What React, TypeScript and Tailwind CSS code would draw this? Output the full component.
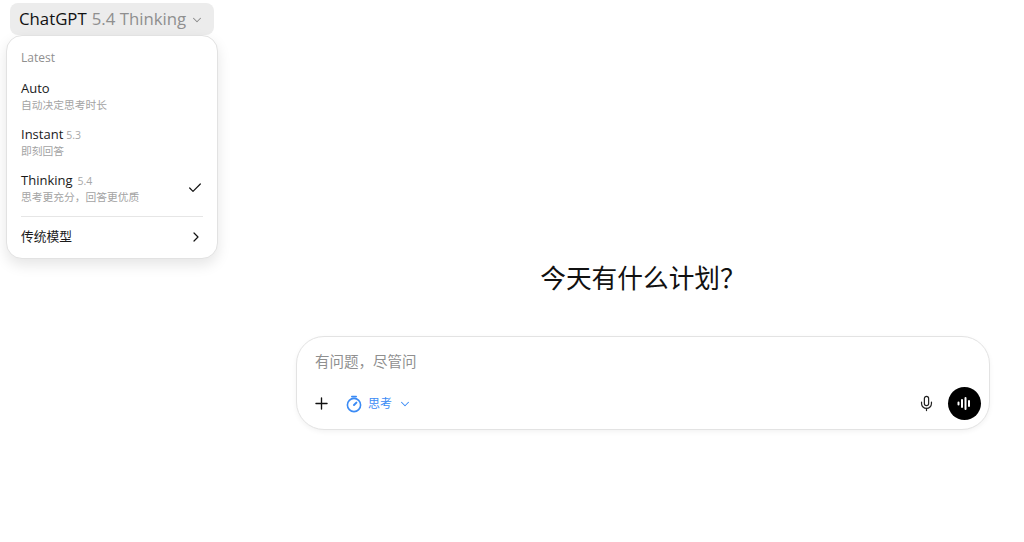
import React from "react";
import { Check, ChevronDown, ChevronRight, Mic, Plus } from "lucide-react";

function Item({ name, ver, sub, checked, gap }: { name: string; ver?: string; sub: string; checked?: boolean; gap?: string }) {
  return (
    <div className="flex h-[46px] items-center justify-between pl-[14px] pr-[14px]">
      <div className="flex flex-col">
        <div className={`flex items-baseline h-[17px] leading-[17px] ${gap === "wide" ? "gap-[5px]" : "gap-[3px]"}`}>
          <span className="text-[13px] text-[#1a1a1a]">{name}</span>
          {ver && <span className="text-[10.5px] text-[#a8a8a8]">{ver}</span>}
        </div>
        <div className="mt-px text-[10.75px] leading-[14px] text-[#a3a3a3]">{sub}</div>
      </div>
      {checked && <Check size={16} strokeWidth={1.8} className="text-[#111]" />}
    </div>
  );
}

export default function App() {
  return (
    <div className="relative h-[542px] w-[1024px] overflow-hidden bg-white [font-family:'Open_Sans','Noto_Sans_CJK_SC',sans-serif]">
      <div className="pl-[10px] pt-[3px]">
        <button className="flex h-[32px] w-[204px] items-center rounded-[8px] bg-[#ececec] pl-[9px] pt-px text-[16.8px] leading-none whitespace-nowrap">
          <span className="text-[#111]">ChatGPT</span>
          <span className="ml-[5px] text-[#8f8f8f]">5.4 Thinking</span>
          <ChevronDown size={14} strokeWidth={1.8} className="ml-[4px] text-[#8a8a8a]" />
        </button>
      </div>

      <div className="absolute left-[6px] top-[35px] h-[224px] w-[212px] rounded-[16px] border border-[#e2e2e2] bg-white pt-[10px] shadow-[0_6px_14px_rgba(0,0,0,0.10)]">
        <div className="h-[26px] pl-[14px] text-[12px] leading-[24px] text-[#8f8f8f]">Latest</div>
        <div className="h-px" />
        <Item name="Auto" sub="自动决定思考时长" />
        <Item name="Instant" ver="5.3" sub="即刻回答" />
        <Item name="Thinking" ver="5.4" sub="思考更充分，回答更优质" checked gap="wide" />
        <div className="mx-[14px] mt-[5px] h-px bg-[#e6e6e6]" />
        <div className="flex h-[40px] items-center justify-between pl-[14px] pr-[13px]">
          <span className="text-[12.75px] text-[#1a1a1a]">传统模型</span>
          <ChevronRight size={16} strokeWidth={1.8} className="text-[#111]" />
        </div>
      </div>

      <div className="ml-[296px] mr-[34px] flex flex-col pt-[224px]">
        <h1 className="h-[40px] text-center text-[25.7px] font-normal leading-[40px] text-[#111]">今天有什么计划？</h1>
        <div className="mt-[37px] h-[94px] rounded-[28px] border border-[#e3e3e3] bg-white shadow-[0_2px_5px_rgba(0,0,0,0.05)]">
          <div className="pl-[18px] pt-[15px] text-[14.5px] leading-[20px] text-[#8f8f8f]">有问题，尽管问</div>
          <div className="mt-[15px] flex items-center pl-[15px] pr-[8px]">
            <Plus size={19} strokeWidth={1.7} className="text-[#111]" />
            <svg width="18" height="18" viewBox="0 0 18 18" fill="none" stroke="#3b8bf5" strokeWidth="1.6" strokeLinecap="round" className="ml-[14px]">
              <circle cx="9" cy="10" r="6.6" />
              <path d="M6.8 1.6h4.4" />
              <path d="M9 10l2.4-2.4" strokeWidth="2" />
            </svg>
            <span className="ml-[5px] text-[12px] text-[#3b8bf5]">思考</span>
            <ChevronDown size={14} strokeWidth={1.8} className="ml-[6px] text-[#3b8bf5]" />
            <div className="flex-1" />
            <Mic size={17} strokeWidth={1.7} className="text-[#222]" />
            <div className="ml-[13px] flex h-[33px] w-[33px] items-center justify-center rounded-full bg-black">
              <svg width="15" height="13" viewBox="0 0 15 13" stroke="#fff" strokeWidth="2" strokeLinecap="round">
                <path d="M1.5 5.5v2M5 3v7M8.5 1v11M12 4v5" />
              </svg>
            </div>
          </div>
        </div>
      </div>
    </div>
  );
}
